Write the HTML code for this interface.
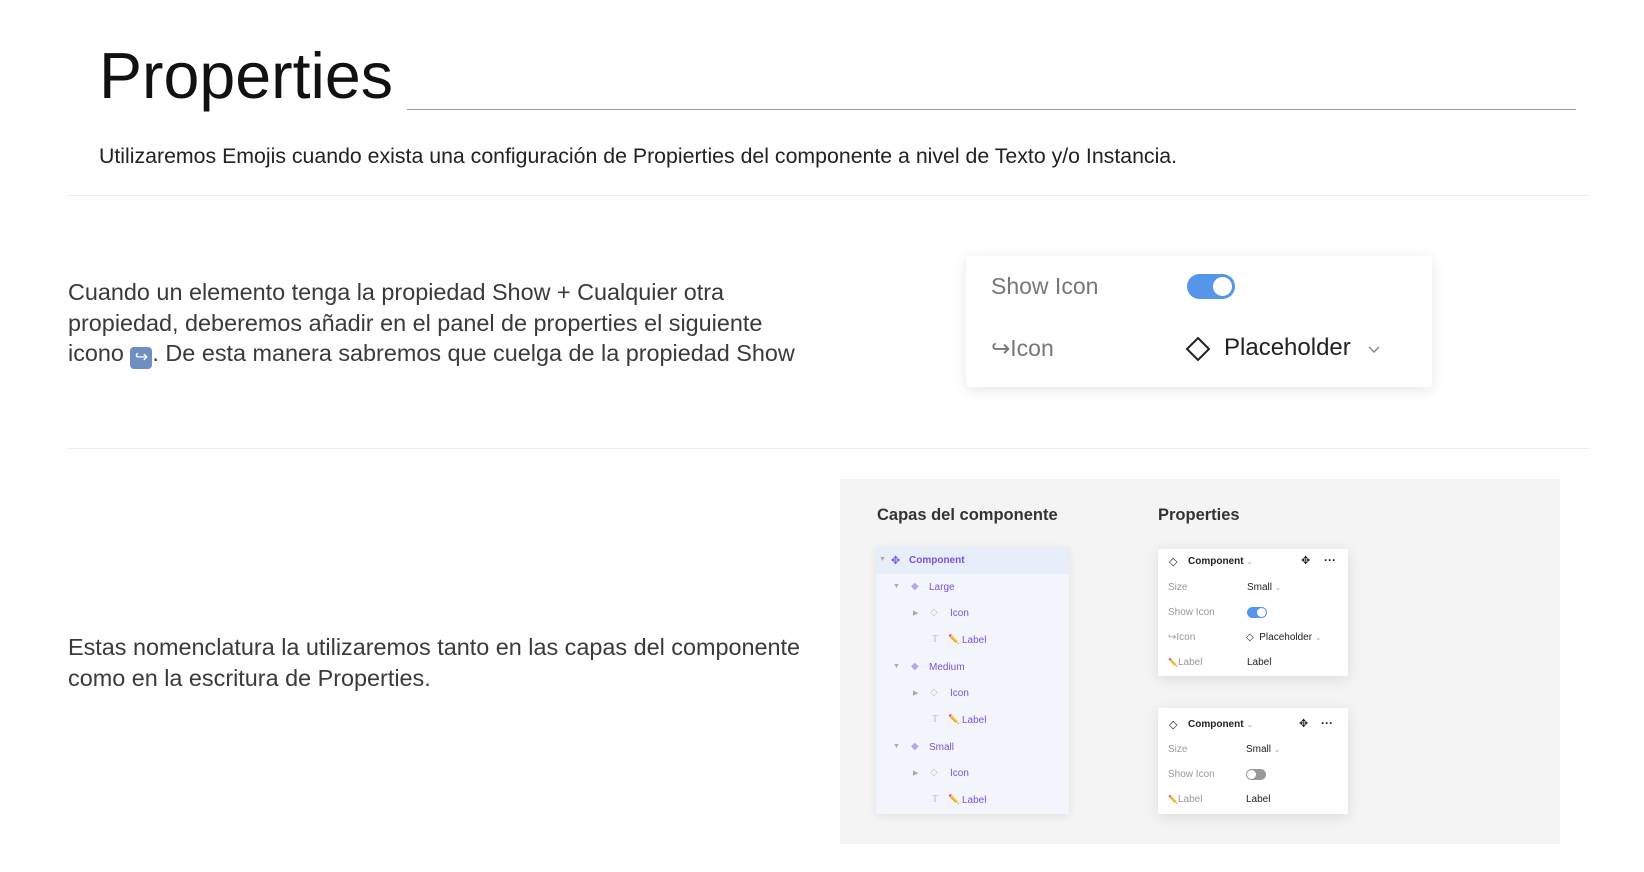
<!DOCTYPE html>
<html><head><meta charset="utf-8"><style>
*{margin:0;padding:0;box-sizing:border-box}
body{width:1644px;height:872px;background:#fff;position:relative;overflow:hidden;font-family:"Liberation Sans","DejaVu Sans",sans-serif;color:#222}
.a{position:absolute;white-space:nowrap}
.hr{position:absolute;height:1px;background:#ececec}
.p{font-size:23.4px;color:#3a3a3a;line-height:30.5px}
.card{position:absolute;background:#fff;box-shadow:0 3px 14px rgba(0,0,0,.10);border-radius:4px}
.row{position:absolute;font-size:10px;line-height:12px}
.lab{color:#999}
.val{color:#222}
.tree{color:#7b4fe0;font-size:10px}
</style></head><body>
<div class="a" style="left:99px;top:38px;font-size:64.5px;color:#111;line-height:76px">Properties</div>
<div class="hr" style="left:407px;top:109px;width:1169px;background:#9a9a9a"></div>
<div class="a" style="left:99px;top:144px;font-size:21.3px;color:#222">Utilizaremos Emojis cuando exista una configuración de Propierties del componente a nivel de Texto y/o Instancia.</div>
<div class="hr" style="left:68px;top:195px;width:1521px"></div>

<div class="a p" style="left:68px;top:277px">Cuando un elemento tenga la propiedad Show + Cualquier otra<br>propiedad, deberemos añadir en el panel de properties el siguiente<br>icono <span style="display:inline-block;width:22px;height:22px;background:#6d8fc1;border-radius:4px;color:#fff;font-size:16px;line-height:22px;text-align:center;vertical-align:-1px">↪</span>. De esta manera sabremos que cuelga de la propiedad Show</div>

<div class="card" style="left:966px;top:256px;width:466px;height:131px">
 <div class="a" style="left:25px;top:17px;font-size:23px;color:#777">Show Icon</div>
 <div class="a" style="left:221px;top:18px;width:48px;height:25px;border-radius:13px;background:#5595ea"><div style="position:absolute;right:3px;top:3px;width:19px;height:19px;border-radius:50%;background:#fff"></div></div>
 <div class="a" style="left:25px;top:79px;font-size:23px;color:#777">↪Icon</div>
 <svg class="a" style="left:219px;top:80px" width="26" height="26" viewBox="0 0 26 26"><path d="M13 2 L24 13 L13 24 L2 13 Z" fill="none" stroke="#222" stroke-width="2"/></svg>
 <div class="a" style="left:258px;top:78px;font-size:24px;color:#222">Placeholder</div>
 <svg class="a" style="left:401px;top:89px" width="14" height="9" viewBox="0 0 14 9"><path d="M2 2 L7 7 L12 2" fill="none" stroke="#888" stroke-width="1.5"/></svg>
</div>

<div class="hr" style="left:68px;top:448px;width:1521px"></div>

<div class="a p" style="left:68px;top:632px">Estas nomenclatura la utilizaremos tanto en las capas del componente<br>como en la escritura de Properties.</div>

<div class="a" style="left:840px;top:479px;width:720px;height:365px;background:#f3f4f3"></div>
<div class="a" style="left:877px;top:506px;font-size:16.5px;font-weight:bold;color:#333">Capas del componente</div>
<div class="a" style="left:1158px;top:506px;font-size:16.5px;font-weight:bold;color:#333">Properties</div>

<div class="a" style="left:876px;top:547px;width:193px;height:267px;background:#f2f6fc;box-shadow:0 2px 8px rgba(0,0,0,.08)">
 <div style="position:absolute;left:0;top:0;width:193px;height:27px;background:#e6eff9"></div>
</div>
<div class="a tree" style="left:0;top:0">
 <div class="a" style="left:879px;top:556px;font-size:7px;color:#aaa">▼</div>
 <div class="a" style="left:891px;top:554px;font-size:11px">✥</div>
 <div class="a" style="left:909px;top:555px;font-weight:bold">Component</div>

 <div class="a" style="left:893px;top:583px;font-size:7px;color:#aaa">▼</div>
 <div class="a" style="left:911px;top:581px;color:#b9a4e6">◆</div>
 <div class="a" style="left:929px;top:582px">Large</div>
 <div class="a" style="left:913px;top:609px;font-size:7px;color:#aaa">▶</div>
 <div class="a" style="left:930px;top:607px;color:#bbb">◇</div>
 <div class="a" style="left:950px;top:608px">Icon</div>
 <div class="a" style="left:932px;top:634px;color:#bbb;font-family:'Liberation Serif',serif">T</div>
 <div class="a" style="left:948px;top:634px;font-size:9px">✏️</div>
 <div class="a" style="left:962px;top:635px">Label</div>

 <div class="a" style="left:893px;top:663px;font-size:7px;color:#aaa">▼</div>
 <div class="a" style="left:911px;top:661px;color:#b9a4e6">◆</div>
 <div class="a" style="left:929px;top:662px">Medium</div>
 <div class="a" style="left:913px;top:689px;font-size:7px;color:#aaa">▶</div>
 <div class="a" style="left:930px;top:687px;color:#bbb">◇</div>
 <div class="a" style="left:950px;top:688px">Icon</div>
 <div class="a" style="left:932px;top:714px;color:#bbb;font-family:'Liberation Serif',serif">T</div>
 <div class="a" style="left:948px;top:714px;font-size:9px">✏️</div>
 <div class="a" style="left:962px;top:715px">Label</div>

 <div class="a" style="left:893px;top:743px;font-size:7px;color:#aaa">▼</div>
 <div class="a" style="left:911px;top:741px;color:#b9a4e6">◆</div>
 <div class="a" style="left:929px;top:742px">Small</div>
 <div class="a" style="left:913px;top:769px;font-size:7px;color:#aaa">▶</div>
 <div class="a" style="left:930px;top:767px;color:#bbb">◇</div>
 <div class="a" style="left:950px;top:768px">Icon</div>
 <div class="a" style="left:932px;top:794px;color:#bbb;font-family:'Liberation Serif',serif">T</div>
 <div class="a" style="left:948px;top:794px;font-size:9px">✏️</div>
 <div class="a" style="left:962px;top:795px">Label</div>
</div>

<div class="card" style="left:1158px;top:549px;width:190px;height:127px;border-radius:2px">
 <div class="row val" style="left:11px;top:7px;font-size:11px">◇</div>
 <div class="row val" style="left:30px;top:7px;font-weight:bold">Component <span style="color:#aaa;font-weight:normal;font-size:8px">⌄</span></div>
 <div class="row val" style="left:143px;top:6px;font-size:11px">✥</div>
 <div class="row val" style="left:166px;top:5px;font-size:12px;font-weight:bold">···</div>
 <div class="row lab" style="left:10px;top:33px">Size</div>
 <div class="row val" style="left:89px;top:33px">Small <span style="color:#aaa;font-size:8px">⌄</span></div>
 <div class="row lab" style="left:10px;top:58px">Show Icon</div>
 <div class="a" style="left:89px;top:58px;width:20px;height:11px;border-radius:6px;background:#5595ea"><div style="position:absolute;right:1px;top:1px;width:9px;height:9px;border-radius:50%;background:#fff"></div></div>
 <div class="row lab" style="left:10px;top:83px">↪Icon</div>
 <div class="row val" style="left:88px;top:83px">◇&nbsp; Placeholder <span style="color:#aaa;font-size:8px">⌄</span></div>
 <div class="row lab" style="left:10px;top:108px"><span style="font-size:8px">✏️</span>Label</div>
 <div class="row val" style="left:89px;top:108px">Label</div>
</div>

<div class="card" style="left:1158px;top:708px;width:190px;height:106px;border-radius:2px">
 <div class="row val" style="left:11px;top:11px;font-size:11px">◇</div>
 <div class="row val" style="left:30px;top:11px;font-weight:bold">Component <span style="color:#aaa;font-weight:normal;font-size:8px">⌄</span></div>
 <div class="row val" style="left:141px;top:10px;font-size:11px">✥</div>
 <div class="row val" style="left:163px;top:9px;font-size:12px;font-weight:bold">···</div>
 <div class="row lab" style="left:10px;top:36px">Size</div>
 <div class="row val" style="left:88px;top:36px">Small <span style="color:#aaa;font-size:8px">⌄</span></div>
 <div class="row lab" style="left:10px;top:61px">Show Icon</div>
 <div class="a" style="left:88px;top:61px;width:20px;height:11px;border-radius:6px;background:#999"><div style="position:absolute;left:1px;top:1px;width:9px;height:9px;border-radius:50%;background:#fff"></div></div>
 <div class="row lab" style="left:10px;top:86px"><span style="font-size:8px">✏️</span>Label</div>
 <div class="row val" style="left:88px;top:86px">Label</div>
</div>
</body></html>
